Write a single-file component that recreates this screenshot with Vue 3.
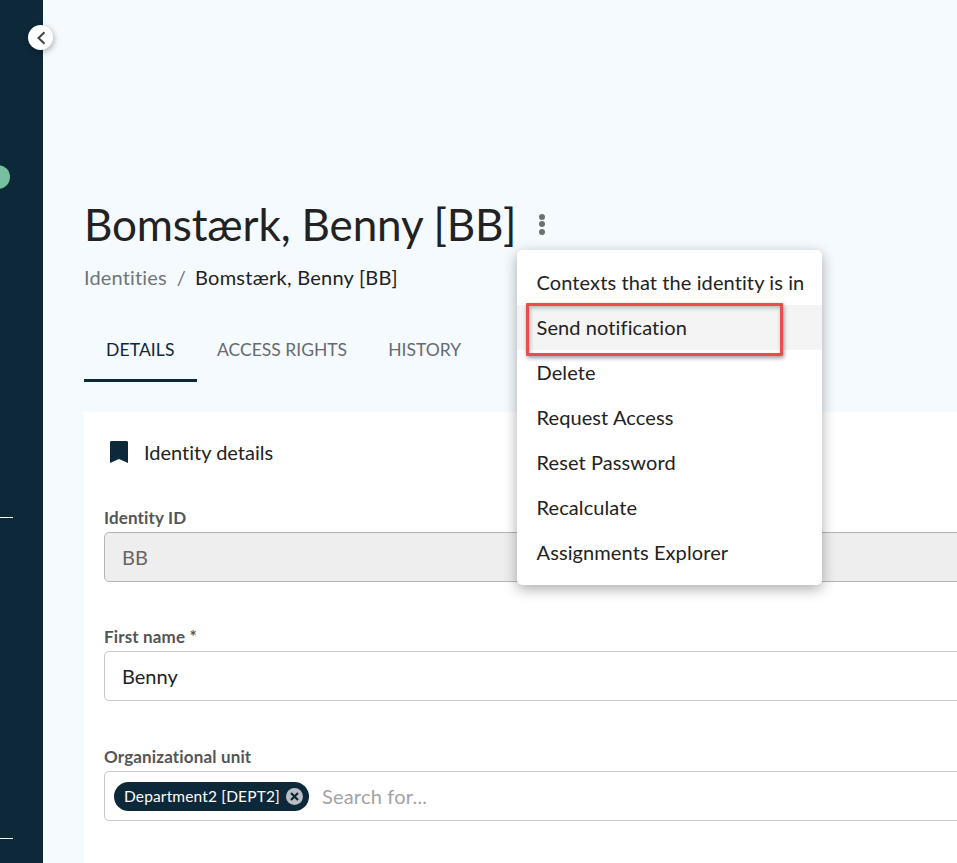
<template>
  <div class="page">
    <nav class="sidebar">
      <span class="status-dot"></span>
      <span class="side-line line-one"></span>
      <span class="side-line line-two"></span>
    </nav>
    <button class="collapse-btn" aria-label="Collapse menu">
      <svg width="12" height="14" viewBox="0 0 12 14">
        <path d="M9.500 1.200 3.500 7l6 5.800" fill="none" stroke="#3d4448" stroke-width="2" />
      </svg>
    </button>

    <main class="content">
      <header class="title-row">
        <h1 class="title">{{ name }}</h1>
        <button class="more-btn" aria-label="More actions">
          <i></i><i></i><i></i>
        </button>
      </header>

      <div class="crumbs">
        <span class="crumb-link">Identities</span>
        <span class="crumb-sep">/</span>
        <span>{{ name }}</span>
      </div>

      <div class="tabs">
        <div
          v-for="tab in tabs"
          :key="tab"
          class="tab"
          :class="{ active: tab === 'DETAILS' }"
        >
          {{ tab }}
        </div>
      </div>

      <section class="card">
        <div class="card-head">
          <svg width="20" height="23" viewBox="0 0 20 23">
            <path d="M1 2.500C1 1.500 1.700 1 2.500 1h15c.8 0 1.500.5 1.500 1.500V23l-9-4-9 4z" fill="#0c2839" />
          </svg>
          <span>Identity details</span>
        </div>

        <div class="field">
          <label>Identity ID</label>
          <div class="input disabled">BB</div>
        </div>

        <div class="field">
          <label>First name *</label>
          <div class="input">Benny</div>
        </div>

        <div class="field">
          <label>Organizational unit</label>
          <div class="input tags">
            <span class="chip">
              Department2 [DEPT2]
              <svg width="17" height="17" viewBox="0 0 17 17">
                <circle cx="8.500" cy="8.500" r="8.500" fill="#b9bec2" />
                <path d="m5 5 7 7m0-7-7 7" stroke="#0c2839" stroke-width="2.200" />
              </svg>
            </span>
            <span class="placeholder">Search for...</span>
          </div>
        </div>
      </section>
    </main>

    <div class="menu">
      <div
        v-for="item in menuItems"
        :key="item"
        class="menu-item"
        :class="{ hovered: item === 'Send notification' }"
      >
        {{ item }}
      </div>
      <span class="highlight"></span>
    </div>
  </div>
</template>

<script setup>
const name = 'Bomstærk, Benny [BB]'
const tabs = ['DETAILS', 'ACCESS RIGHTS', 'HISTORY']
const menuItems = [
  'Contexts that the identity is in',
  'Send notification',
  'Delete',
  'Request Access',
  'Reset Password',
  'Recalculate',
  'Assignments Explorer',
]
</script>

<style>
html, body {
  margin: 0;
  background: #f5faff;
}
</style>

<style scoped>
.page {
  position: relative;
  display: flex;
  width: 957px;
  height: 863px;
  overflow: hidden;
  background: #f5faff;
  color: #222;
  font-family: Lato, "Noto Sans", sans-serif;
  font-variant-ligatures: none;
}

.sidebar {
  position: relative;
  flex: none;
  width: 44px;
  background: #0c2839;
  border-right: 1px solid #fff;
  box-sizing: border-box;
}

.status-dot {
  position: absolute;
  left: -14px;
  top: 165px;
  width: 24px;
  height: 24px;
  border-radius: 50%;
  background: #76c09f;
}

.side-line {
  position: absolute;
  left: 0;
  width: 13px;
  height: 1px;
  background: #fff;
}
.line-one { top: 517px; }
.line-two { top: 838px; }

.collapse-btn {
  position: absolute;
  left: 28px;
  top: 25px;
  width: 25px;
  height: 25px;
  padding: 0;
  display: flex;
  align-items: center;
  justify-content: center;
  border: 0;
  border-radius: 50%;
  background: #fff;
  box-shadow: 1px 2px 6px rgba(0, 0, 0, 0.3);
}

.content {
  flex: 1;
  min-width: 0;
  padding: 199px 0 0 40px;
}

.title-row {
  display: flex;
  align-items: center;
  height: 50px;
}

.title {
  margin: 0;
  font-size: 44px;
  font-weight: 400;
  letter-spacing: -0.15px;
  line-height: 50px;
  color: #222;
  white-space: nowrap;
}

.more-btn {
  display: flex;
  flex-direction: column;
  gap: 1.500px;
  margin-left: 23px;
  padding: 0;
  border: 0;
  background: none;
}
.more-btn i {
  width: 6px;
  height: 6px;
  border-radius: 50%;
  background: #6b7075;
}

.crumbs {
  display: flex;
  margin-top: 16px;
  font-size: 20px;
  letter-spacing: 0.25px;
  line-height: 24px;
  white-space: nowrap;
}
.crumb-link {
  letter-spacing: 0.15px;
  color: #70757a;
}
.crumb-sep {
  margin: 0 9px 0 10px;
  color: #70757a;
}

.tabs {
  display: flex;
  margin-top: 27px;
}
.tab {
  height: 66px;
  box-sizing: border-box;
  padding: 22px 20.500px 0;
  font-size: 17.500px;
  line-height: 24px;
  color: #666b70;
  white-space: nowrap;
}
.tab.active {
  padding: 22px 22px 0;
  letter-spacing: 0.12px;
  color: #0c2839;
  border-bottom: 3px solid #0c2839;
}

.card {
  margin: 30px -30px 0 0;
  padding: 20px 20px 0;
  height: 500px;
  background: #fff;
}

.card-head {
  display: flex;
  align-items: center;
  gap: 15px;
  margin-left: 5px;
  height: 39px;
  font-size: 20px;
  color: #222;
}

.field {
  margin-top: 37px;
}
.field + .field {
  margin-top: 45px;
}
.field:last-child {
  margin-top: 46px;
}
.field label {
  display: block;
  margin-bottom: 4px;
  font-size: 17px;
  font-weight: 700;
  letter-spacing: 0.15px;
  line-height: 20px;
  color: #555;
}

.input {
  box-sizing: border-box;
  height: 50px;
  padding: 0 17px;
  display: flex;
  align-items: center;
  border: 1px solid #c8c8c8;
  border-radius: 5px;
  background: #fff;
  font-size: 20px;
  color: #222;
}
.input.disabled {
  background: #eee;
  border-color: #b4b4b4;
  color: #666;
}
.input.tags {
  padding-left: 9px;
}

.chip {
  display: flex;
  align-items: center;
  gap: 6px;
  height: 29px;
  padding: 0 6px 0 10px;
  border-radius: 15px;
  background: #0c2839;
  color: #fff;
  font-size: 15.500px;
  letter-spacing: 0.15px;
  white-space: nowrap;
}

.placeholder {
  margin-left: 13px;
  letter-spacing: 0.2px;
  color: #a3a3a3;
}

.menu {
  position: absolute;
  left: 517px;
  top: 250px;
  width: 305px;
  padding: 10px 0;
  background: #fff;
  border-radius: 5px;
  box-shadow: 0 4px 14px rgba(0, 0, 0, 0.33);
}
.menu-item {
  height: 45px;
  padding-left: 19.500px;
  font-size: 20px;
  letter-spacing: 0.1px;
  line-height: 45px;
  color: #222;
  white-space: nowrap;
}
.menu-item.hovered {
  background: #f4f4f4;
}

.highlight {
  position: absolute;
  left: 9px;
  top: 53px;
  width: 257px;
  height: 53px;
  box-sizing: border-box;
  border: 3px solid #f14a4d;
  border-radius: 1px;
  box-shadow: 1px 2px 4px rgba(0, 0, 0, 0.4), inset 1px 2px 4px rgba(0, 0, 0, 0.25);
}
</style>
